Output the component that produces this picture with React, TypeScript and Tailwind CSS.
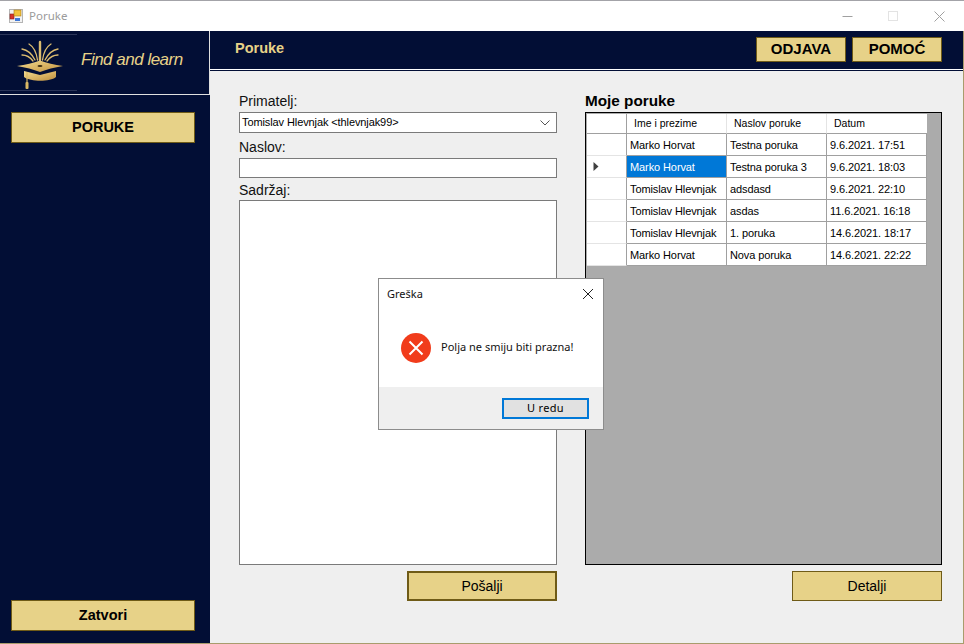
const ROWS = [
  { name: "Marko Horvat", title: "Testna poruka", date: "9.6.2021. 17:51" },
  { name: "Marko Horvat", title: "Testna poruka 3", date: "9.6.2021. 18:03", current: true },
  { name: "Tomislav Hlevnjak", title: "adsdasd", date: "9.6.2021. 22:10" },
  { name: "Tomislav Hlevnjak", title: "asdas", date: "11.6.2021. 16:18" },
  { name: "Tomislav Hlevnjak", title: "1. poruka", date: "14.6.2021. 18:17" },
  { name: "Marko Horvat", title: "Nova poruka", date: "14.6.2021. 22:22" },
];

const GOLD_BTN = "flex items-center justify-center bg-[#e7d288] border border-[#6f5b17] text-black";

function AppIcon() {
  return (
    <svg width="14" height="14" viewBox="0 0 14 14" className="shrink-0">
      <rect x="0.5" y="0.5" width="13" height="13" fill="#f2f2f2" stroke="#b5b5b5" />
      <rect x="1" y="5" width="4" height="5" fill="#d8342c" stroke="#8d1f1a" strokeWidth="0.6" />
      <rect x="5" y="1" width="7" height="6" fill="#f3c33b" stroke="#b07c10" strokeWidth="0.6" />
      <rect x="6" y="9" width="5" height="3" fill="#3f78d8" />
    </svg>
  );
}

function Logo() {
  return (
    <svg width="77" height="56" viewBox="0 0 77 56" className="shrink-0">
      <defs>
        <linearGradient id="gold" x1="0" y1="0" x2="1" y2="1">
          <stop offset="0" stopColor="#f3dc93" />
          <stop offset="0.55" stopColor="#d9b261" />
          <stop offset="1" stopColor="#b98d3f" />
        </linearGradient>
      </defs>
      <g fill="none" stroke="#dcbc70" strokeWidth="1.3" strokeLinecap="round">
        <path d="M40 25 L40 7" strokeWidth="2.4" />
        <path d="M37.5 25 C36.5 18 34 12 29 9" />
        <path d="M42.5 25 C43.5 18 46 12 51 9" />
        <path d="M35 25 C32 19 28 15 22 14" />
        <path d="M45 25 C48 19 52 15 58 14" />
        <path d="M33 26 C30 22 26 20 22 20" />
        <path d="M47 26 C50 22 54 20 58 20" />
      </g>
      <path d="M17 31 Q30 29 40 25.5 Q50 29 63 31 Q50 33 40 37 Q30 33 17 31 Z" fill="url(#gold)" />
      <ellipse cx="40" cy="31" rx="2.5" ry="0.9" fill="#3b2a10" />
      <path d="M24 36 L40 40 L56 36 L56 42 C50 47 31 47 24 42 Z" fill="url(#gold)" />
      <path d="M27 37 L27 50" stroke="#d9b865" strokeWidth="1.2" />
      <rect x="25.5" y="47" width="3" height="7" rx="1" fill="#d9b865" />
    </svg>
  );
}

export default function App() {
  return (
    <div className="relative w-[964px] h-[644px] overflow-hidden flex flex-col bg-white font-['Liberation_Sans',sans-serif] text-black">
      {/* Title bar */}
      <div className="h-[31px] shrink-0 flex items-center pl-[9px] pr-[19px] border-t border-[#a3a3a8] bg-white">
        <AppIcon />
        <span className="ml-[6px] text-[11.5px] text-[#9b9b9b] font-['Noto_Sans',sans-serif]">Poruke</span>
        <div className="ml-auto flex items-center gap-[35px]">
          <svg width="11" height="11" viewBox="0 0 11 11"><path d="M0.5 5.5H10.5" stroke="#a0a0a0" /></svg>
          <svg width="11" height="11" viewBox="0 0 11 11"><rect x="0.5" y="0.5" width="9" height="9" fill="none" stroke="#e3e3e3" /></svg>
          <svg width="11" height="11" viewBox="0 0 11 11"><path d="M0.5 0.5L10.5 10.5M10.5 0.5L0.5 10.5" stroke="#a0a0a0" /></svg>
        </div>
      </div>

      <div className="flex flex-1 min-h-0 pr-[1px] pb-[1px] bg-[#a89c6c]">
        {/* Sidebar */}
        <aside className="w-[210px] shrink-0 flex flex-col bg-[#020e35]">
          <div className="h-[64px] shrink-0 flex items-center border-b border-r border-[#e0e0e0]">
            <div className="w-[77px] h-[57px] border-y border-[#2b3558] flex items-center">
              <Logo />
            </div>
            <span className="ml-[4px] -mt-[6px] italic text-[17px] tracking-[-0.5px] text-[#e7d288]">Find and learn</span>
          </div>
          <button className={`${GOLD_BTN} ml-[11px] mt-[17px] h-[31px] w-[184px] font-bold text-[14.5px]`}>PORUKE</button>
          <button className={`${GOLD_BTN} ml-[11px] mt-auto mb-[12px] h-[31px] w-[184px] font-bold text-[14.5px]`}>Zatvori</button>
        </aside>

        {/* Main */}
        <main className="flex-1 min-w-0 flex flex-col bg-[#efefef]">
          <header className="h-[39px] shrink-0 flex items-center bg-[#020e35] border-b border-white shadow-[0_1px_0_#020e35] pl-[25px] pr-[21px]">
            <h1 className="font-bold text-[14.5px] text-[#e7d288] -mt-[3px]">Poruke</h1>
            <div className="ml-auto flex gap-[6px] -mt-[1px]">
              <button className={`${GOLD_BTN} w-[90px] h-[25px] font-bold text-[15px]`}>ODJAVA</button>
              <button className={`${GOLD_BTN} w-[90px] h-[25px] font-bold text-[15px]`}>POMOĆ</button>
            </div>
          </header>

          <div className="flex flex-1 min-h-0 pt-[25px] pl-[29px] gap-[28px]">
            {/* Form */}
            <section className="w-[318px] shrink-0 flex flex-col">
              <label className="h-[17px] text-[14px] leading-[12px] text-[#111]">Primatelj:</label>
              <div className="h-[21px] flex items-center border border-[#7a7a7a] bg-white pl-[2px] pr-[6px] text-[11px] tracking-[-0.1px]">
                <span>Tomislav Hlevnjak &lt;thlevnjak99&gt;</span>
                <svg width="10" height="6" viewBox="0 0 10 6" className="ml-auto"><path d="M0.5 0.5L5 5L9.5 0.5" fill="none" stroke="#555" /></svg>
              </div>
              <label className="mt-[6px] h-[19px] text-[14px] leading-[17px] text-[#111]">Naslov:</label>
              <div className="h-[20px] border border-[#7a7a7a] bg-white" />
              <label className="mt-[4px] h-[18px] text-[14px] leading-[17px] text-[#111]">Sadržaj:</label>
              <div className="h-[365px] border border-[#7a7a7a] bg-white" />
              <button className="self-end mt-[6px] w-[150px] h-[30px] flex items-center justify-center bg-[#e7d288] border-2 border-[#6f5b17] text-[14px]">Pošalji</button>
            </section>

            {/* Messages */}
            <section className="w-[357px] shrink-0 flex flex-col">
              <h2 className="h-[17px] font-bold text-[15.3px] leading-[12px]">Moje poruke</h2>
              <div className="h-[453px] border border-black bg-[#ababab] pt-[1px] pl-[1px] text-[11px] tracking-[-0.1px]">
                <div className="grid grid-cols-[40px_100px_100px_100px] w-[340px]">
                  <div className="h-[20px] bg-white border-r border-[#a0a0a0] border-b" />
                  <div className="h-[20px] bg-white border-r border-[#e4e4e4] border-b border-b-[#a0a0a0] pl-[7px] leading-[19px] text-[10.5px] tracking-normal">Ime i prezime</div>
                  <div className="h-[20px] bg-white border-r border-[#e4e4e4] border-b border-b-[#a0a0a0] pl-[7px] leading-[19px] text-[10.5px] tracking-normal">Naslov poruke</div>
                  <div className="h-[20px] bg-white border-b border-[#a0a0a0] pl-[7px] leading-[19px] text-[10.5px] tracking-normal">Datum</div>
                  {ROWS.map((r) => (
                    <div key={r.date} className="contents">
                      <div className="h-[22px] bg-white border-r border-[#a0a0a0] border-b border-b-[#e4e4e4] flex items-center pl-[6px]">
                        {r.current && (
                          <svg width="6" height="9" viewBox="0 0 6 9"><path d="M0.5 0L5.5 4.5L0.5 9Z" fill="#404040" /></svg>
                        )}
                      </div>
                      <div className={`h-[22px] border-r border-b border-[#a0a0a0] pl-[3px] leading-[23px] ${r.current ? "bg-[#0078d7] text-white" : "bg-white"}`}>{r.name}</div>
                      <div className="h-[22px] bg-white border-r border-b border-[#a0a0a0] pl-[3px] leading-[23px]">{r.title}</div>
                      <div className="h-[22px] bg-white border-r border-b border-[#a0a0a0] pl-[3px] leading-[23px]">{r.date}</div>
                    </div>
                  ))}
                </div>
              </div>
              <button className={`${GOLD_BTN} self-end mt-[6px] w-[150px] h-[30px] text-[14px]`}>Detalji</button>
            </section>
          </div>
        </main>
      </div>

      {/* Error dialog */}
      <div className="absolute left-[378px] top-[278px] w-[226px] h-[152px] flex flex-col border border-[#8c8c8c] bg-white font-['Noto_Sans',sans-serif] text-[11px]">
        <div className="h-[30px] shrink-0 flex items-center pl-[8px] pr-[9px]">
          <span className="text-[#111]">Greška</span>
          <svg width="12" height="12" viewBox="0 0 12 12" className="ml-auto"><path d="M1 1L11 11M11 1L1 11" stroke="#222" /></svg>
        </div>
        <div className="flex-1 flex items-center pl-[22px] pb-[1px]">
          <svg width="30" height="30" viewBox="0 0 30 30" className="shrink-0">
            <circle cx="15" cy="15" r="15" fill="#f13c1b" />
            <path d="M8.5 8.5L21.5 21.5M21.5 8.5L8.5 21.5" stroke="#fff" strokeWidth="2" />
          </svg>
          <span className="ml-[10px] text-[#111]">Polja ne smiju biti prazna!</span>
        </div>
        <div className="h-[42px] shrink-0 flex items-center justify-end bg-[#efefef] pr-[14px]">
          <button className="w-[87px] h-[21px] flex items-center justify-center bg-[#e1e1e1] border-2 border-[#0078d7] text-[11px] tracking-[0.3px]">U redu</button>
        </div>
      </div>
    </div>
  );
}
